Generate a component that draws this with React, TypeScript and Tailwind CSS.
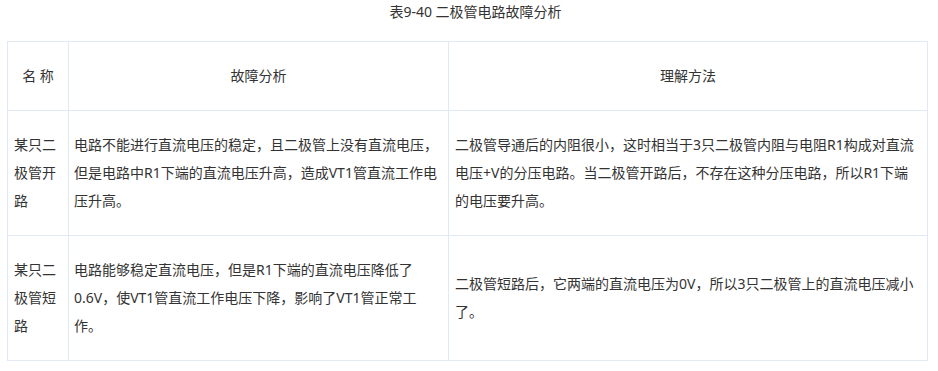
const rows = [
  {
    name: '某只二极管开路',
    fault:
      '电路不能进行直流电压的稳定，且二极管上没有直流电压，但是电路中R1下端的直流电压升高，造成VT1管直流工作电压升高。',
    method:
      '二极管导通后的内阻很小，这时相当于3只二极管内阻与电阻R1构成对直流电压+V的分压电路。当二极管开路后，不存在这种分压电路，所以R1下端的电压要升高。',
  },
  {
    name: '某只二极管短路',
    fault:
      '电路能够稳定直流电压，但是R1下端的直流电压降低了0.6V，使VT1管直流工作电压下降，影响了VT1管正常工作。',
    method: '二极管短路后，它两端的直流电压为0V，所以3只二极管上的直流电压减小了。',
  },
];

export default function App() {
  return (
    <div className="min-h-[371px] w-[938px] bg-white font-['Noto_Sans','Noto_Sans_CJK_SC',sans-serif] text-[14px] text-[#333]">
      {/* Title */}
      <p className="pl-[13px] text-center leading-[24px]">表9-40 二极管电路故障分析</p>

      <table className="ml-[7px] mt-[17px] w-[920px] table-fixed border-collapse leading-[28px]">
        <colgroup>
          <col className="w-[61px]" />
          <col className="w-[380px]" />
          <col className="w-[479px]" />
        </colgroup>
        <thead>
          <tr>
            <th className="border border-[#e1eaf4] px-[6px] py-[20px] text-center font-normal">名 称</th>
            <th className="border border-[#e1eaf4] px-[5px] py-[20px] text-center font-normal">故障分析</th>
            <th className="border border-[#e1eaf4] px-[6px] py-[20px] text-center font-normal">理解方法</th>
          </tr>
        </thead>
        <tbody>
          {rows.map((row, index) => (
            <tr key={index}>
              <td className="border border-[#e1eaf4] py-[20px] pl-[6px] pr-[4px] align-middle">{row.name}</td>
              <td className="border border-[#e1eaf4] py-[20px] pl-[5px] pr-[4px] align-middle">{row.fault}</td>
              <td className="border border-[#e1eaf4] py-[20px] pl-[6px] pr-[6px] align-middle">{row.method}</td>
            </tr>
          ))}
        </tbody>
      </table>
    </div>
  );
}
